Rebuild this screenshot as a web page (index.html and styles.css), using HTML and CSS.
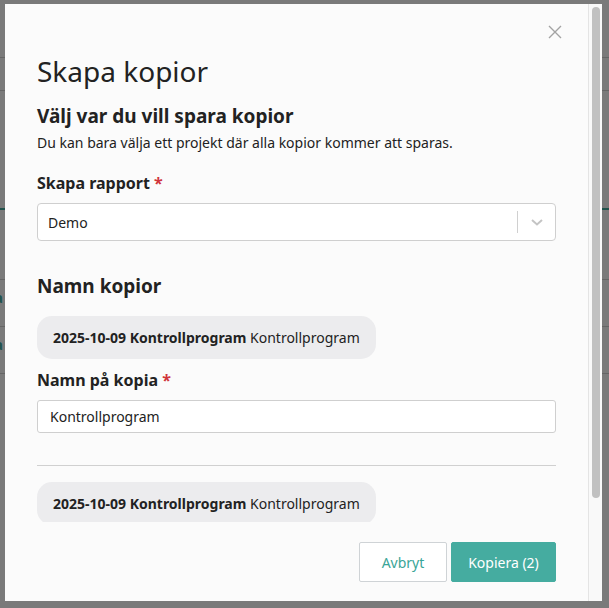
FILE: index.html
```html
<html>
<head>
    <link rel="stylesheet" href="styles.css">
</head>
<body>
    <!-- page behind the dialog -->
    <div class="page">
        <div class="row row-head"></div>
        <div class="row row-tabs"></div>
        <div class="row row-tab-line"></div>
        <div class="row row-first"></div>
        <div class="row"><div class="cell-end"><span class="link">Öppna</span></div></div>
        <div class="row"><div class="cell-end"><span class="link">Öppna</span></div></div>
    </div>
    <div class="overlay"></div>

    <div class="modal">
        <div class="modal-main">
            <button class="close" aria-label="Stäng">
                <svg width="14" height="14" viewBox="0 0 14 14">
                    <path d="M1 1L13 13M13 1L1 13" stroke="#a3a3a3" stroke-width="1.4" fill="none"/>
                </svg>
            </button>
            <div class="modal-body">
                <h1 class="title">Skapa kopior</h1>
                <h2 class="section">Välj var du vill spara kopior</h2>
                <p class="hint">Du kan bara välja ett projekt där alla kopior kommer att sparas.</p>

                <label class="label">Skapa rapport <span class="req">*</span></label>
                <div class="select">
                    <span class="select-value">Demo</span>
                    <span class="select-sep"></span>
                    <span class="select-arrow">
                        <svg width="14" height="10" viewBox="0 0 14 10">
                            <path d="M2 3L7 7.5L12 3" stroke="#c4c4c4" stroke-width="2" fill="none"/>
                        </svg>
                    </span>
                </div>

                <h2 class="section section-gap">Namn kopior</h2>

                <div class="copy">
                    <div class="chip"><b>2025-10-09 Kontrollprogram</b>&nbsp;Kontrollprogram</div>
                    <label class="label label-tight">Namn på kopia <span class="req">*</span></label>
                    <input class="input" type="text" value="Kontrollprogram">
                </div>
                <div class="divider"></div>
                <div class="copy copy-next">
                    <div class="chip"><b>2025-10-09 Kontrollprogram</b>&nbsp;Kontrollprogram</div>
                </div>
            </div>
            <div class="modal-footer">
                <button class="btn btn-cancel">Avbryt</button>
                <button class="btn btn-primary">Kopiera (2)</button>
            </div>
        </div>
        <div class="rail"><div class="thumb"></div></div>
    </div>
</body>
</html>
```

FILE: styles.css
```css
html, body {
    margin: 0px;
    width: 100%;
    height: 100%;
    overflow: hidden;
    font-family: "Noto Sans", "Open Sans", sans-serif;
    color: #222;
}
body {
    background: #fff;
}
.page {
    display: flex;
    flex-direction: column;
}
.row {
    border-bottom: 1px solid #d4d4d4;
    height: 46px;
    display: flex;
    align-items: flex-start;
}
.row-head {
    height: 57px;
}
.row-tabs {
    height: 32px;
}
.row-tab-line {
    height: 117px;
    border-bottom: 2px solid #45aca0;
}
.row-first {
    height: 69px;
}
.cell-end {
    width: 3px;
    display: flex;
    justify-content: flex-end;
    white-space: nowrap;
    padding-top: 8px;
    line-height: 19px;
}
.link {
    color: #45aca0;
    font-weight: 700;
    font-size: 14px;
}
.overlay {
    position: fixed;
    inset: 0;
    background: rgba(0, 0, 0, 0.52);
}
.modal {
    position: fixed;
    left: 5px;
    top: 4px;
    width: 597px;
    height: 597px;
    background: #fbfbfb;
    display: flex;
    box-sizing: border-box;
}
.modal-main {
    position: relative;
    flex: 1;
    display: flex;
    flex-direction: column;
    min-width: 0;
}
.close {
    position: absolute;
    top: 21px;
    right: 26px;
    background: none;
    border: 0;
    padding: 0;
    width: 14px;
    height: 14px;
    cursor: pointer;
}
.close svg {
    display: block;
}
.modal-body {
    flex: 1;
    overflow: hidden;
    padding: 49px 32px 0 32px;
}
.title {
    margin: 0;
    font-size: 28px;
    line-height: 36px;
    font-weight: 400;
    color: #222;
}
.section {
    margin: 14px 0 0 0;
    font-size: 19px;
    line-height: 26px;
    font-weight: 700;
}
.section-gap {
    margin-top: 32px;
}
.hint {
    margin: 4px 0 0 0;
    font-size: 14px;
    line-height: 20px;
}
.label {
    display: block;
    margin-top: 19px;
    font-size: 16px;
    line-height: 22px;
    font-weight: 700;
}
.label-tight {
    margin-top: 10px;
}
.req {
    color: #d0343a;
}
.select {
    margin-top: 9px;
    height: 38px;
    box-sizing: border-box;
    border: 1px solid #cfcfcf;
    border-radius: 4px;
    background: #fff;
    display: flex;
    align-items: center;
    padding-left: 10px;
}
.select-value {
    flex: 1;
    font-size: 14px;
}
.select-sep {
    width: 1px;
    height: 22px;
    background: #d0d0d0;
}
.select-arrow {
    width: 37px;
    display: flex;
    justify-content: center;
}
.select-arrow svg {
    display: block;
}
.copy {
    display: flex;
    flex-direction: column;
    align-items: flex-start;
}
.chip {
    margin-top: 17px;
    height: 43px;
    display: flex;
    align-items: center;
    padding: 0 16px;
    background: #ececee;
    border-radius: 15px;
    font-size: 14px;
    white-space: nowrap;
}
.chip b {
    font-weight: 700;
}
.input {
    margin-top: 9px;
    width: 100%;
    height: 33px;
    box-sizing: border-box;
    border: 1px solid #cfcfcf;
    border-radius: 3px;
    background: #fff;
    padding: 0 12px;
    font-family: inherit;
    font-size: 14px;
    color: #222;
}
.divider {
    margin-top: 32px;
    height: 1px;
    background: #d0d0d0;
}
.copy-next .chip {
    margin-top: 16px;
}
.modal-footer {
    height: 79px;
    display: flex;
    justify-content: flex-end;
    gap: 4px;
    padding: 20px 32px 0 32px;
    box-sizing: border-box;
}
.btn {
    height: 40px;
    border-radius: 2px;
    font-family: inherit;
    font-size: 14px;
    cursor: pointer;
}
.btn-cancel {
    width: 88px;
    background: #fff;
    border: 1px solid #cfd3d6;
    color: #3aa597;
}
.btn-primary {
    width: 105px;
    background: #45aca0;
    border: 1px solid #45aca0;
    color: #fff;
}
.rail {
    width: 14px;
    box-sizing: border-box;
    border-left: 1px solid #e4e4e4;
    background: #f9f9f9;
    padding: 3px 2px 0 3px;
}
.thumb {
    height: 491px;
    border-radius: 5px;
    background: #c1c1c1;
}
```
